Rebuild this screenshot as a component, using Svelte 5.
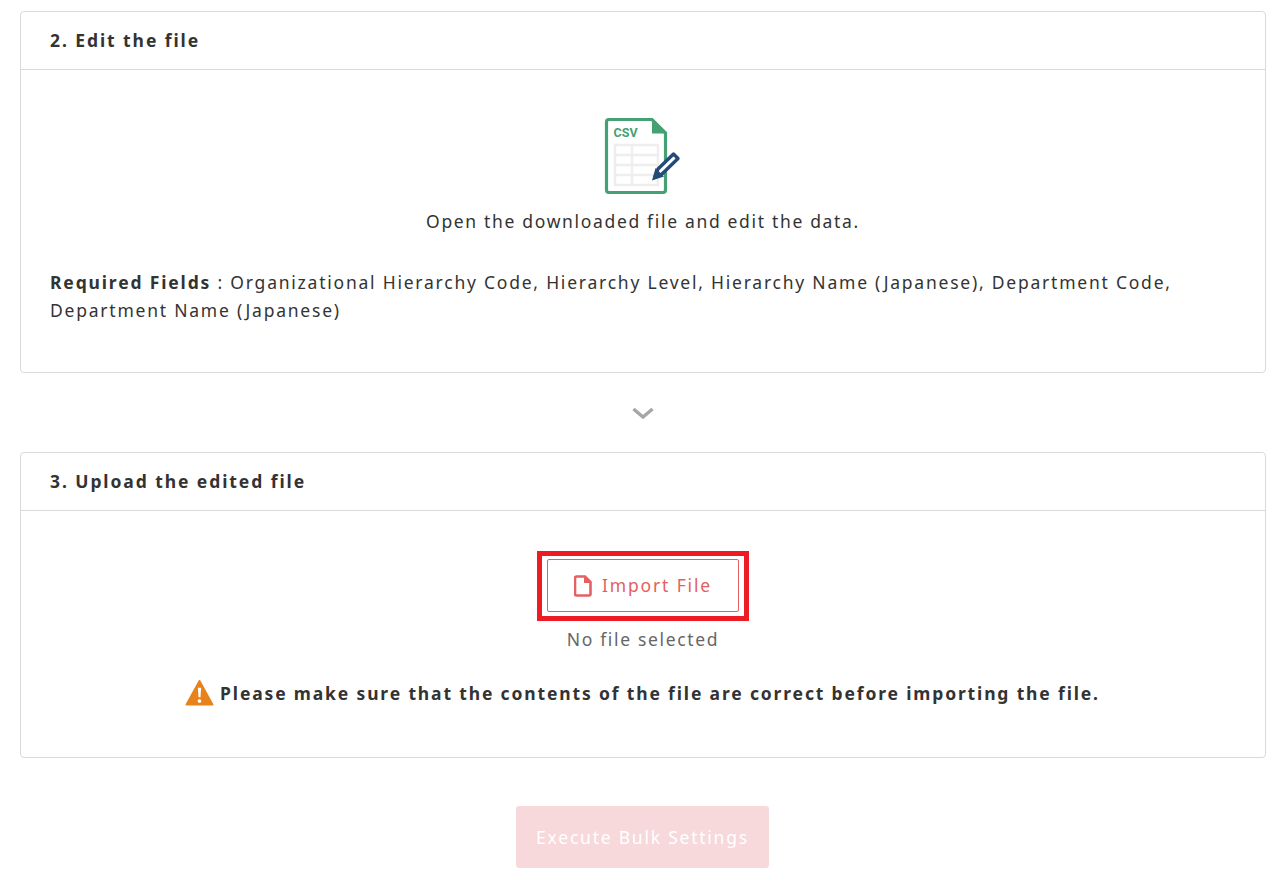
<script>
  const requiredFields = 'Organizational Hierarchy Code, Hierarchy Level, Hierarchy Name (Japanese), Department Code, Department Name (Japanese)';
</script>

<div class="page">
  <section class="card edit">
    <h2>2. Edit the file</h2>
    <div class="body">
      <svg class="csv" width="80" height="80" viewBox="0 0 80 80">
        <path d="M6 2.500H49L62.500 16V73a2.500 2.500 0 0 1-2.500 2.500H6A2.500 2.500 0 0 1 3.500 73V5A2.500 2.500 0 0 1 6 2.500Z" fill="#fff" stroke="#45a074" stroke-width="3.200" />
        <path d="M49 1.500L64 16.500H49Z" fill="#45a074" />
        <text x="10.500" y="20" class="csv-label">CSV</text>
        <g fill="none" stroke="#eee" stroke-width="2.500">
          <rect x="12" y="28" width="43" height="40" />
          <path d="M12 38H55M12 48H55M12 58H55M29 28V68" />
        </g>
        <path d="M52 60L55 52L70.500 37L75 41.500L59 57Z" fill="#fff" stroke="#234a78" stroke-width="3.400" stroke-linejoin="round" />
        <path d="M49 63.500L52.500 51L61 59.500Z" fill="#234a78" />
      </svg>
      <p class="lead">Open the downloaded file and edit the data.</p>
      <p class="fields"><b>Required Fields</b> : {requiredFields}</p>
    </div>
  </section>

  <div class="arrow">
    <svg width="22" height="12" viewBox="0 0 22 12"><path d="M1.500 2L11 10L20.500 2" fill="none" stroke="#a6a6a6" stroke-width="3.400" /></svg>
  </div>

  <section class="card upload">
    <h2>3. Upload the edited file</h2>
    <div class="body">
      <div class="highlight">
        <button class="import">
          <svg width="18" height="22" viewBox="0 0 18 22">
            <path d="M2.500 1.500H11L16.500 7V19a1.500 1.500 0 0 1-1.500 1.500H2.500A1.500 1.500 0 0 1 1 19V3a1.500 1.500 0 0 1 1.500-1.500Z" fill="#fff" stroke="#e56060" stroke-width="2.600" />
            <path d="M10 1L17 8H10Z" fill="#e56060" />
          </svg>
          Import File
        </button>
      </div>
      <p class="status">No file selected</p>
      <p class="warning">
        <svg width="29" height="28" viewBox="0 0 30 28">
          <path d="M15 1.500L28.500 26H1.500Z" fill="#e8831c" stroke="#e8831c" stroke-width="2" stroke-linejoin="round" />
          <path d="M13.300 8.500H16.700L16 18.500H14Z" fill="#fff" />
          <circle cx="15" cy="22.300" r="1.900" fill="#fff" />
        </svg>
        <b>Please make sure that the contents of the file are correct before importing the file.</b>
      </p>
    </div>
  </section>

  <div class="actions">
    <button class="execute" disabled>Execute Bulk Settings</button>
  </div>
</div>

<style>
  :global(body) {
    margin: 0;
    background: #fff;
  }

  .page {
    padding: 11px 22px 9px 20px;
    font-family: "Noto Sans", "Open Sans", sans-serif;
    font-size: 17.5px;
    letter-spacing: 1.67px;
    color: #333;
  }

  b {
    font-weight: 700;
    letter-spacing: 1.85px;
  }

  .card {
    border: 1px solid #d9d9d9;
    border-radius: 4px;
  }

  h2 {
    margin: 0;
    height: 57px;
    line-height: 57px;
    padding-left: 29px;
    border-bottom: 1px solid #d9d9d9;
    font-size: 17.5px;
    font-weight: 700;
    letter-spacing: 1.92px;
  }

  .edit .body {
    height: 302px;
    padding: 0 29px;
    display: flex;
    flex-direction: column;
    align-items: center;
  }

  .csv {
    margin-top: 47px;
    margin-left: -1px;
  }

  .csv-label {
    font-family: Roboto, sans-serif;
    font-size: 12.500px;
    font-weight: 700;
    letter-spacing: 0;
    fill: #45a074;
  }

  .lead {
    margin: 12px 0 0;
    line-height: 24px;
  }

  .fields {
    margin: 35px 0 0;
    line-height: 28px;
    align-self: stretch;
    letter-spacing: 1.77px;
  }

  .arrow {
    height: 79px;
    display: flex;
    align-items: center;
    justify-content: center;
  }

  .upload .body {
    height: 246px;
    display: flex;
    flex-direction: column;
    align-items: center;
  }

  .highlight {
    margin-top: 40px;
    border: 5px solid #ed1c24;
    padding: 3px 5px 4px;
    background: #fff;
  }

  .import {
    width: 192px;
    height: 53px;
    padding: 0 0 2px;
    display: flex;
    align-items: center;
    justify-content: center;
    gap: 10px;
    border: 1px solid #e56060;
    border-radius: 2px;
    background: #fff;
    color: #e56060;
    font: inherit;
    letter-spacing: 1.85px;
  }

  .import svg {
    margin-top: 2px;
  }

  .status {
    margin: 7px 0 0;
    line-height: 23px;
    color: #666;
  }

  .warning {
    margin: 27px 1px 0 0;
    display: flex;
    align-items: center;
    gap: 6px;
    line-height: 30px;
  }

  .actions {
    margin-top: 48px;
    padding-right: 1px;
    display: flex;
    justify-content: center;
  }

  .execute {
    width: 253px;
    height: 62px;
    border: 0;
    border-radius: 3px;
    background: #f7d9dc;
    color: #fff;
    font: inherit;
    letter-spacing: 1.77px;
  }
</style>
